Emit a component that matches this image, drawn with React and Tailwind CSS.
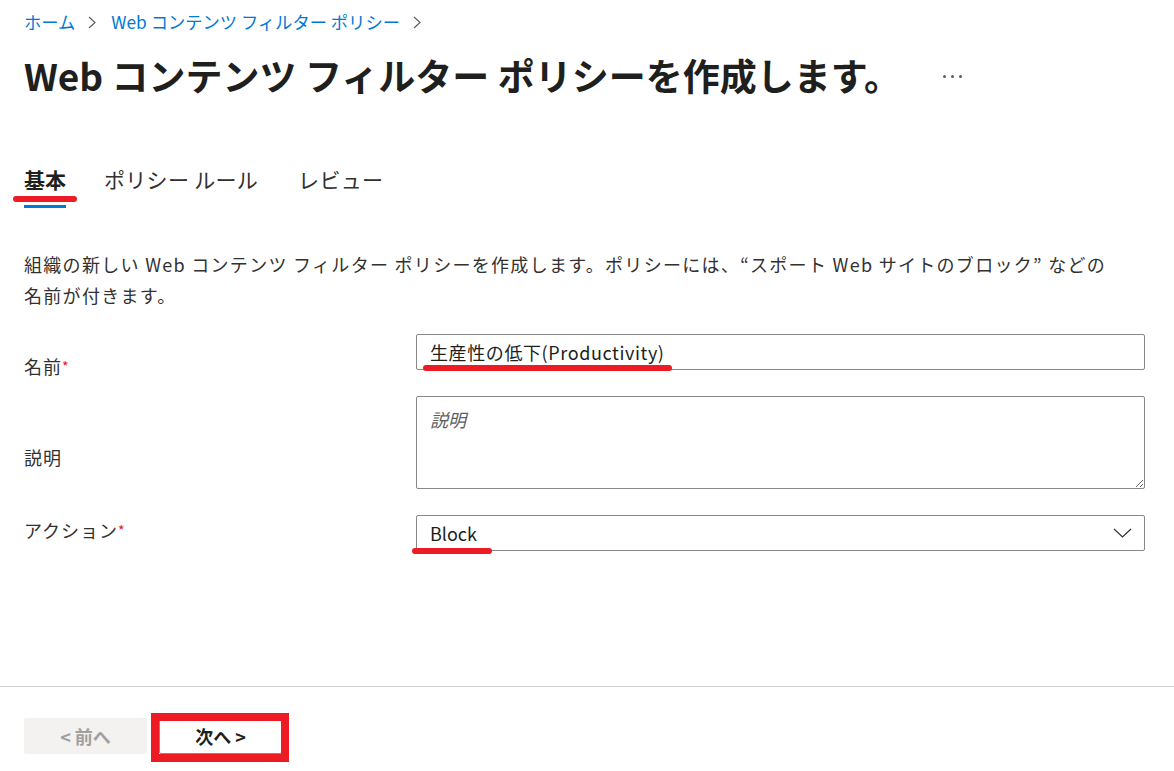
import React from "react";

const font = { fontFamily: '"Noto Sans CJK JP", "Noto Sans", sans-serif' };

function Chev() {
  return (
    <svg width="8" height="13" viewBox="0 0 8 13" className="text-[#605e5c]">
      <polyline points="1,1 7,6.5 1,12" fill="none" stroke="currentColor" strokeWidth="1.2" />
    </svg>
  );
}

export default function App() {
  return (
    <div
      className="w-[1174px] h-[771px] bg-white relative overflow-hidden text-[#323130] antialiased"
      style={font}
    >
      <div className="px-6">
        {/* breadcrumb */}
        <div className="mt-[10px] h-6 flex items-center text-[17.3px] leading-6 text-[#0078d4]">
          <span>ホーム</span>
          <span className="ml-[13px] mr-[15px] flex items-center"><Chev /></span>
          <span>Web コンテンツ フィルター ポリシー</span>
          <span className="ml-[13px] flex items-center"><Chev /></span>
        </div>

        {/* title */}
        <div className="mt-[17px] h-12 flex items-center">
          <h1 className="text-[37px] leading-[48px] font-bold text-[#201f1e]">
            Web コンテンツ フィルター ポリシーを作成します。
          </h1>
          <div className="ml-[42px] flex items-center gap-[5px] mt-[2px]">
            <span className="w-[3px] h-[3px] bg-[#605e5c] rounded-full" />
            <span className="w-[3px] h-[3px] bg-[#605e5c] rounded-full" />
            <span className="w-[3px] h-[3px] bg-[#605e5c] rounded-full" />
          </div>
        </div>

        {/* tabs */}
        <div className="mt-[66px] flex items-start text-[21px] leading-7">
          <div className="relative flex flex-col">
            <span className="font-bold text-[#201f1e]">基本</span>
            <span className="mt-[12px] h-[3px] bg-[#0078d4]" />
            <span className="absolute left-[-11px] top-[31px] w-[64px] h-[6px] rounded-full bg-[#ed1c24]" />
          </div>
          <span className="ml-[38px] text-[#323130] tracking-[0.3px]">ポリシー ルール</span>
          <span className="ml-[40px] text-[#323130] tracking-[0.3px]">レビュー</span>
        </div>

        {/* description */}
        <p className="mt-[41px] text-[18px] leading-[31px] text-[#323130] tracking-[1.3px]">
          組織の新しい Web コンテンツ フィルター ポリシーを作成します。ポリシーには、“スポート Web サイトのブロック” などの
          <br />
          名前が付きます。
        </p>

        {/* form */}
        <div className="mt-[23px] flex flex-col gap-[26px]">
          <div className="flex items-start h-[36px]">
            <div className="w-[392px] shrink-0 mt-[20px] text-[18px] leading-6 tracking-[1px]">
              名前<span className="text-[#e81123] text-[14px] align-top">*</span>
            </div>
            <div className="relative w-[729px] h-[36px] border border-[#8a8886] rounded-[2px] flex items-center px-[13px] text-[18px] text-[#201f1e] tracking-[0.6px]">
              生産性の低下(Productivity)
              <span className="absolute left-[6px] top-[30px] w-[249px] h-[6px] rounded-full bg-[#ed1c24]" />
            </div>
          </div>

          <div className="flex items-start h-[93px]">
            <div className="w-[392px] shrink-0 mt-[49px] text-[18px] leading-6 tracking-[1px]">説明</div>
            <textarea
              placeholder="説明"
              className="w-[729px] h-[93px] border border-[#8a8886] rounded-[2px] px-[13px] py-[10px] text-[18px] leading-6 placeholder:italic placeholder:text-[#605e5c] outline-none resize"
              style={font}
            />
          </div>

          <div className="flex items-start h-[36px]">
            <div className="w-[392px] shrink-0 mt-[3px] text-[18px] leading-6 tracking-[1px]">
              アクション<span className="text-[#e81123] text-[14px] align-top">*</span>
            </div>
            <div className="relative w-[729px] h-[36px] border border-[#8a8886] rounded-[2px] flex items-center justify-between pl-[13px] pr-[12px] text-[18px] text-[#201f1e]">
              <span>Block</span>
              <svg width="19" height="10" viewBox="0 0 19 10">
                <polyline points="1,1 9.5,9 18,1" fill="none" stroke="#323130" strokeWidth="1.2" />
              </svg>
              <span className="absolute left-[-5px] top-[32px] w-[80px] h-[6px] rounded-full bg-[#ed1c24]" />
            </div>
          </div>
        </div>
      </div>

      {/* footer */}
      <div className="absolute left-0 right-0 top-[686px] border-t border-[#d2d0ce]">
        <div className="px-6 pt-[31px] flex gap-[12px]">
          <button
            className="w-[123px] h-[36px] rounded-[2px] bg-[#f3f2f1] text-[#a19f9d] text-[18px] font-bold flex items-center justify-center"
            style={font}
          >
            &lt; 前へ
          </button>
          <div className="relative">
            <button
              className="w-[123px] h-[36px] rounded-[2px] bg-white border border-[#8a8886] text-[#201f1e] text-[18px] font-bold flex items-center justify-center"
              style={font}
            >
              次へ &gt;
            </button>
            <span className="absolute left-[-8px] top-[-5px] right-[-7px] bottom-[-8px] border-[8px] border-[#ed1c24]" />
          </div>
        </div>
      </div>
    </div>
  );
}
